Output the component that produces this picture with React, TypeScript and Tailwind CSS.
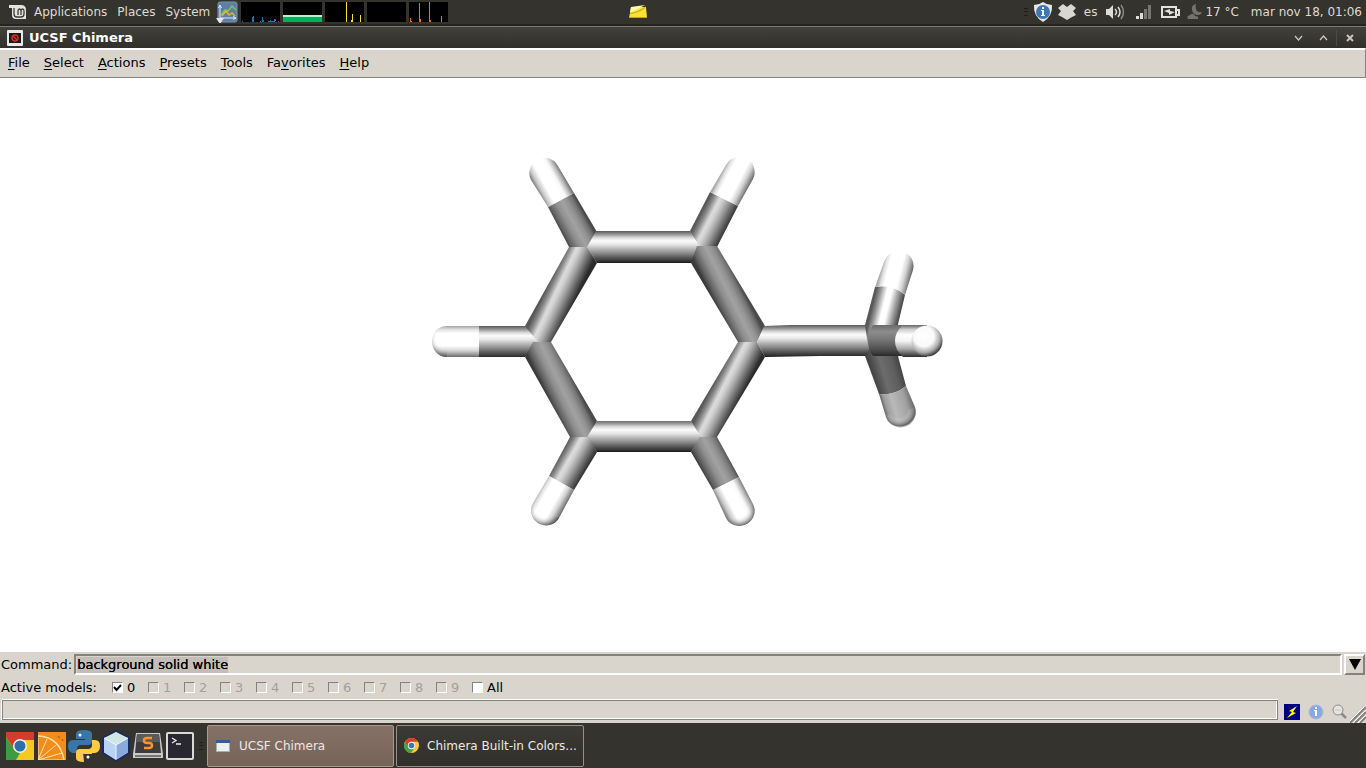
import React from "react";

type Pt = [number, number];
type Stops = [number, string][];

const LIT: Stops = [[0, "#626262"], [0.1, "#999"], [0.2, "#dadada"], [0.3, "#fcfcfc"], [0.42, "#e6e6e6"], [0.55, "#bababa"], [0.7, "#8a8a8a"], [0.85, "#555"], [0.95, "#363636"], [1, "#1e1e1e"]];
const SIDE: Stops = [[0, "#585858"], [0.14, "#888"], [0.32, "#dcdcdc"], [0.42, "#d2d2d2"], [0.6, "#a4a4a4"], [0.82, "#606060"], [1, "#2a2a2a"]];
const DULL: Stops = [[0, "#4a4a4a"], [0.12, "#747474"], [0.28, "#929292"], [0.45, "#a2a2a2"], [0.65, "#8e8e8e"], [0.86, "#626262"], [1, "#3a3a3a"]];
const WHITE: Stops = [[0, "#acacac"], [0.1, "#e2e2e2"], [0.22, "#fff"], [0.62, "#fff"], [0.78, "#d4d4d4"], [0.92, "#8e8e8e"], [1, "#606060"]];
const WHITE_DULL: Stops = [[0, "#747474"], [0.12, "#bcbcbc"], [0.26, "#f8f8f8"], [0.38, "#fff"], [0.68, "#fff"], [0.86, "#c8c8c8"], [1, "#747474"]];
const BRIGHT: Stops = [[0, "#585858"], [0.15, "#999"], [0.35, "#fff"], [0.5, "#fff"], [0.68, "#b0b0b0"], [0.87, "#606060"], [1, "#2c2c2c"]];
const SHADE: Stops = [[0, "#3e3e3e"], [0.3, "#5e5e5e"], [0.65, "#6c6c6c"], [1, "#444"]];
const SHADE_H: Stops = [[0, "#6a6a6a"], [0.25, "#a2a2a2"], [0.65, "#b9b9b9"], [0.88, "#9c9c9c"], [1, "#606060"]];
const FRONT: Stops = [[0, "#6c6c6c"], [0.2, "#8d8d8d"], [0.45, "#777"], [0.8, "#4a4a4a"], [1, "#262626"]];

// A stick piece: outline d, shaded across the axis that runs from a to b.
const sticks: { d: string; a: Pt; b: Pt; stops: Stops }[] = [
  { d: "M548 207L574 193 597 232 588 247H569Z", a: [544, 172], b: [584, 245], stops: DULL },
  { d: "M548 207L574 193 558 166A15 15 0 1 0 531 180Z", a: [544, 172], b: [584, 245], stops: WHITE_DULL },
  { d: "M710 192L738 206 717 247H697L690 231Z", a: [703, 243], b: [740, 171], stops: SIDE },
  { d: "M710 192L738 206 753 179A15 15 0 1 0 726 165Z", a: [703, 243], b: [740, 171], stops: WHITE },
  { d: "M596 231H690L700 247 691 263H597L587 247Z", a: [590, 247], b: [700, 247], stops: LIT },
  { d: "M569 247H587L597 263 551 342H533L525 326Z", a: [538, 342], b: [583, 247], stops: SIDE },
  { d: "M697 246H717L765 326 757 342H738L691 263Z", a: [704, 247], b: [751, 341], stops: DULL },
  { d: "M479 326H525L538 342 525 357H479Z", a: [447, 342], b: [538, 342], stops: LIT },
  { d: "M479 326H447A15 15 0 0 0 447 357H479Z", a: [447, 342], b: [538, 342], stops: WHITE },
  { d: "M533 342H551L597 421 590 437H570L525 357Z", a: [538, 342], b: [584, 437], stops: DULL },
  { d: "M738 342H757L765 357 717 437H699L691 421Z", a: [704, 436], b: [752, 342], stops: SIDE },
  { d: "M597 421H691L701 437 691 452H597L587 437Z", a: [590, 436], b: [700, 436], stops: LIT },
  { d: "M570 437H588L597 452 574 490 549 476Z", a: [546, 510], b: [586, 440], stops: SIDE },
  { d: "M574 490L549 476 533 503A15 15 0 1 0 559 518Z", a: [546, 510], b: [586, 440], stops: WHITE },
  { d: "M691 452L700 437H717L739 477 713 490Z", a: [703, 441], b: [740, 511], stops: DULL },
  { d: "M739 477L713 490 726 518A15 15 0 1 0 753 504Z", a: [703, 441], b: [740, 511], stops: WHITE_DULL },
  { d: "M764 326L790 325H872V356H820L765 357 757 342Z", a: [757, 341], b: [870, 341], stops: LIT },
  { d: "M865 325L875 287Q893 284 905 295L893 345H868Z", a: [881, 335], b: [898, 266], stops: BRIGHT },
  { d: "M875 287Q893 284 905 295L913 270A15 15 0 1 0 884 262Z", a: [881, 335], b: [898, 266], stops: WHITE },
  { d: "M865 356L872 345H895L906 386Q894 396 879 394Z", a: [880, 345], b: [900, 411], stops: SHADE },
  { d: "M906 386Q894 396 879 394L886 417A15 15 0 0 0 915 407Z", a: [880, 345], b: [900, 411], stops: SHADE_H },
  { d: "M873 325H905V356H873Q868 350 868 341T873 325Z", a: [868, 341], b: [910, 341], stops: FRONT },
  { d: "M903 325H927V357H903Q895 350 895 341T903 325Z", a: [895, 341], b: [930, 341], stops: [[0, "#707070"], [0.12, "#ccc"], [0.3, "#fff"], [0.5, "#f4f4f4"], [0.75, "#aaa"], [1, "#333"]] },
];

function Molecule() {
  return (
    <svg viewBox="0 78 1366 574" className="h-full w-full" role="img" aria-label="Toluene stick model">
      <defs>
        {sticks.map(({ a, b, stops }, i) => {
          const dx = b[0] - a[0];
          const dy = b[1] - a[1];
          const n = Math.hypot(dx, dy);
          const side = dx < 0 ? -1 : 1;
          const cx = (a[0] + b[0]) / 2;
          const cy = (a[1] + b[1]) / 2;
          const nx = side * (-dy / n) * 15.5;
          const ny = side * (dx / n) * 15.5;
          return (
            <linearGradient key={i} id={`s${i}`} gradientUnits="userSpaceOnUse" x1={cx - nx} y1={cy - ny} x2={cx + nx} y2={cy + ny}>
              {stops.map(([o, c]) => <stop key={o} offset={o} stopColor={c} />)}
            </linearGradient>
          );
        })}
        <radialGradient id="ball" cx=".4" cy=".35" r=".65">
          <stop offset="0" stopColor="#fff" /><stop offset=".5" stopColor="#fafafa" /><stop offset=".8" stopColor="#aaa" /><stop offset="1" stopColor="#444" />
        </radialGradient>
        <radialGradient id="cap" cx=".45" cy=".4" r=".6">
          <stop offset=".5" stopColor="#fff" stopOpacity="0" /><stop offset="1" stopColor="#444" stopOpacity=".8" />
        </radialGradient>
        <clipPath id="tips"><path d="M430 325H447V359H430ZM528 502L562 520V528H528ZM724 520L757 502V528H724ZM882 417L917 407V428H882Z" /></clipPath>
      </defs>
      {sticks.map(({ d }, i) => <path key={i} d={d} fill={`url(#s${i})`} />)}
      <g clipPath="url(#tips)" fill="url(#cap)">
        <circle cx="447.500" cy="341.500" r="15.500" /><circle cx="546" cy="510.500" r="15" />
        <circle cx="739.500" cy="511" r="15" /><circle cx="900" cy="411.500" r="15" />
      </g>
      <circle cx="927" cy="341" r="15.500" fill="url(#ball)" />
    </svg>
  );
}

function ChromeIcon({ className }: { className: string }) {
  return (
    <svg viewBox="0 0 28 28" className={className}>
      <circle cx="14" cy="14" r="14" fill="#fc3" />
      <path d="M1.900 7A14 14 0 0 1 26.100 7H14L8 17.500Z" fill="#dd3a2f" />
      <path d="M1.900 7A14 14 0 0 0 13 28L20 17.500 14 20.500 8 17.500Z" fill="#3da447" />
      <circle cx="14" cy="14" r="6.800" fill="#f4f4f0" /><circle cx="14" cy="14" r="5.200" fill="#3b78b8" />
    </svg>
  );
}

const graphs = [
  { name: "Processor", svg: <path d="M1 20v-1h1v1M11 20v-5h1v5M12 20v-6h1v6M19 20v-1h1v1M21 20v-5h1v5M22 20v-2h1v2M27 20v-1h2v-1h1v2M30 20v-1h3v-2h2v2h-1v1M37 20v-1h1v1" fill="#1377bb" /> },
  { name: "Memory", svg: <><path d="M0 13h39v7H0z" fill="#00b35b" /><path d="M0 13h39v2H0z" fill="#aef5cf" /></> },
  { name: "Network", svg: <path d="M21 0h1v20h-1zM27 12h1v8h-2v-2h1zM35 13h1v7h-1z" fill="#fce02f" /> },
  { name: "Swap", svg: null },
  { name: "Disk", svg: <path d="M1 16h1v3h1v1H1zM10 1h1v16h1v3h-2zM20 0h1v20h-1zM21 18h1v2h-1zM32 14h1v6h-1z" fill="#f96e1d" /> },
];

function Handle() {
  return <div className="h-2 w-1 border-y border-[#1e1d1a] py-[2px]"><div className="h-px bg-[#1e1d1a]" /></div>;
}

function TopPanel() {
  return (
    <header className="flex h-[26px] shrink-0 items-center border-b-2 border-[#252420] bg-[#34332e] text-xs text-[#dfdbd2]">
      <svg viewBox="0 0 18 16" className="ml-[9px] mr-[7px] h-4 w-[18px]" fill="none">
        <path d="M0 1h12q5 0 5 5v9H7q-4 0-4-4V4H0z" fill="#e4e3df" />
        <path d="M5 4v6q0 3 3 3h4q3 0 3-3V7q0-2-1.500-2T12 7v4M12 7q0-2-1.500-2T9 7v4" stroke="#3b3a35" strokeWidth="1.300" />
      </svg>
      <nav className="flex gap-[10px]">
        <button>Applications</button><button>Places</button><button>System</button>
      </nav>
      <svg viewBox="0 0 22 22" className="ml-[6px] h-[22px] w-[22px]" fill="none">
        <rect x="2" y="1" width="19" height="20" rx="2" fill="#5c7fa6" stroke="#7895b3" />
        <path d="M5 14L9 9l3 1 4-5 4 4" stroke="#86c252" strokeWidth="1.500" /><path d="M6 15l4-5 3 4 3-2 3 3" stroke="#e0b52c" strokeWidth="1.500" />
        <path d="M4 5v12h15M2.500 7L4 4l1.500 3M17 15.500l3 1.500-3 1.500" stroke="#e5eaf0" /><path d="M0 17h8l-4 6z" fill="#e6e6e6" />
      </svg>
      <div className="ml-[3px] flex gap-[3px]">
        {graphs.map((g) => <svg key={g.name} viewBox="0 0 39 20" className="h-5 w-[39px] bg-black" shapeRendering="crispEdges" aria-label={g.name}>{g.svg}</svg>)}
      </div>
      <svg viewBox="0 0 20 14" className="ml-[181px] h-[14px] w-5">
        <path d="M2 2h15l1 11H0z" fill="#f9e23a" /><path d="M2 2L16 0 1 8z" fill="#fff9a8" /><path d="M1 8Q10 7 17 1l-1 2Q10 8 1 9z" fill="#c8a416" /><path d="M0 12h18v1H0z" fill="#c8a416" />
      </svg>
      <div className="ml-auto flex items-center pr-1">
        <Handle />
        <svg viewBox="0 0 20 20" className="ml-[5px] h-5 w-5">
          <path d="M10 0q4 3 9 3Q20 14 10 20 0 14 1 3q5 0 9-3z" fill="#e8e8e4" /><circle cx="10" cy="10" r="7" fill="#3e77b6" />
          <path d="M9 5h2v2H9zM8 8h3v5h1v1H8v-1h1V9H8z" fill="#fff" />
        </svg>
        <svg viewBox="0 0 18 16" className="ml-[5px] h-4 w-[18px]" fill="#d9d7d1">
          <path d="M5 0l4 3 4-3 5 4-3 3 3 4-4 2-5 3-5-3-4-2 3-4-3-3z" />
        </svg>
        <span className="ml-2">es</span>
        <svg viewBox="0 0 20 16" className="ml-[9px] h-4 w-5" fill="none" stroke="#dedcd7">
          <path d="M0 5h3l4-4v14l-4-4H0z" fill="#dedcd7" stroke="none" /><path d="M9 5q3 3 0 6" strokeWidth="1.500" /><path d="M12 3q4 5 0 10" strokeWidth="1.500" /><path d="M15 1q5 7 0 14" stroke="#8a8883" strokeWidth="1.500" />
        </svg>
        <svg viewBox="0 0 16 14" className="ml-[10px] h-[14px] w-4">
          <path d="M0 11h3v3H0zM4 8h3v6H4z" fill="#dedcd7" /><path d="M8 4h3v10H8zM12 0h3v14h-3z" fill="#777570" />
        </svg>
        <svg viewBox="0 0 19 14" className="ml-[9px] h-[14px] w-[19px]" fill="none">
          <path d="M1 2h14v10H1zM15 5h3v5h-3" stroke="#e4e2dd" strokeWidth="2" /><path d="M3 6l6-2v2l5 1-6 3V8z" fill="#e4e2dd" />
        </svg>
        <svg viewBox="0 0 16 16" className="ml-[7px] h-4 w-4" fill="#75736e">
          <path d="M9 0Q4 1 5 6T11 11q3 0 4-3-5 1-6-3-1-3 0-5z" /><path d="M1 15q-2-3 2-4 3-3 5 1 4 0 3 3z" />
        </svg>
        <span className="ml-[2px]">17 °C</span>
        <time className="ml-3">mar nov 18, 01:06</time>
      </div>
    </header>
  );
}

function TitleBar() {
  return (
    <div className="flex h-[22px] shrink-0 items-center border-t border-[#7b7972] bg-linear-to-b from-[#42413c] to-[#302f2b] text-[#dfdbd2]">
      <svg viewBox="0 0 16 16" className="ml-[7px] mr-[6px] h-4 w-4" fill="none">
        <rect width="16" height="16" rx="1" fill="#e8e8e8" /><path d="M2 3h12v10H2z" fill="#15191a" /><circle cx="8" cy="8" r="3" stroke="#db2b21" strokeWidth="1.500" /><path d="M6 6l4 4" stroke="#db2b21" strokeWidth="1.500" />
      </svg>
      <h1 className="text-[13px] font-bold text-white">UCSF Chimera</h1>
      <div className="ml-auto flex h-full items-center pr-1">
        <button aria-label="Minimize" className="flex w-[25px] justify-center"><svg viewBox="0 0 9 6" className="h-[6px] w-[9px]"><path d="M1 1l3.500 4L8 1" fill="none" stroke="#cfcbc3" strokeWidth="1.200" /></svg></button>
        <button aria-label="Maximize" className="flex w-[25px] justify-center"><svg viewBox="0 0 9 6" className="h-[6px] w-[9px]"><path d="M1 5l3.500-4L8 5" fill="none" stroke="#cfcbc3" strokeWidth="1.200" /></svg></button>
        <button aria-label="Close" className="flex h-4 w-[26px] items-center justify-center border-l border-[#4c4b46]"><svg viewBox="0 0 8 8" className="h-2 w-2"><path d="M1 1l6 6M7 1L1 7" stroke="#c8c4bc" strokeWidth="2" /></svg></button>
      </div>
    </div>
  );
}

const menus: [string, string, string][] = [["", "F", "ile"], ["", "S", "elect"], ["", "A", "ctions"], ["", "P", "resets"], ["", "T", "ools"], ["Fa", "v", "orites"], ["", "H", "elp"]];

function CommandArea() {
  return (
    <section className="shrink-0 bg-[#d9d5cd] pt-[2px] text-[13px] text-black">
      <div className="flex h-[21px] items-center">
        <label htmlFor="command" className="pl-px pr-[2px]">Command:</label>
        <div className="flex h-full flex-1 items-center border-2 border-t-[#85817b] border-l-[#85817b] border-r-white border-b-white pl-px">
          <input id="command" defaultValue="background solid white" className="h-4 bg-[#c3bfb8] outline-none [field-sizing:content] text-shadow-[0_0_0_#000]" />
        </div>
        <button aria-label="Command history" className="ml-[2px] mr-px flex h-full w-[21px] items-center justify-center border-2 border-t-white border-l-white border-r-[#85817b] border-b-[#85817b]">
          <svg viewBox="0 0 12 11" className="h-[11px] w-3"><path d="M0 0h12L6 11z" /></svg>
        </button>
      </div>
      <div className="flex h-[25px] items-center">
        <span className="w-28 pl-px">Active models:</span>
        {["0", "1", "2", "3", "4", "5", "6", "7", "8", "9", "All"].map((m) => {
          const on = m === "0" || m === "All";
          return (
            <label key={m} className={on ? "relative flex w-9 items-center gap-1" : "flex w-9 items-center gap-1 text-[#a39f99]"}>
              <input type="checkbox" defaultChecked={m === "0"} disabled={!on} className={on ? "h-[11px] w-[11px] shrink-0 appearance-none border border-t-[#85817b] border-l-[#85817b] border-r-white border-b-white bg-white" : "h-[11px] w-[11px] shrink-0 appearance-none border border-t-[#85817b] border-l-[#85817b] border-r-white border-b-white"} />
              {m === "0" && <svg viewBox="0 0 9 8" className="pointer-events-none absolute left-px h-2 w-[9px]"><path d="M1 3l2.500 3L8 1" fill="none" stroke="#000" strokeWidth="2" /></svg>}
              {m}
            </label>
          );
        })}
      </div>
      <div className="flex h-[23px] items-center">
        <div className="ml-[2px] mb-1 h-[20px] flex-1 border border-[#85817b] shadow-[inset_-1px_-1px_0_#fff,0_-1px_0_#fff,-1px_0_0_#fff]" />
        <button aria-label="Quick access" className="ml-[6px]">
          <svg viewBox="0 0 16 16" className="h-4 w-4"><path d="M0 0h16v16H0z" fill="#000080" /><path d="M13 2L5 7l3 1-5 6 9-5-3-1z" fill="#ff0" /></svg>
        </button>
        <button aria-label="Information" className="ml-2">
          <svg viewBox="0 0 16 16" className="h-4 w-4"><circle cx="8" cy="8" r="7" fill="#86a8e3" stroke="#b3b9c8" /><path d="M7 3h2v2H7zM6 6h3v6H7V7H6z" fill="#fff" /></svg>
        </button>
        <button aria-label="Find" className="ml-2">
          <svg viewBox="0 0 16 16" className="h-4 w-4" fill="none"><path d="M9.500 9.500L14 14" stroke="#8e8b86" strokeWidth="2.500" /><circle cx="6" cy="6" r="5" fill="#e6e4df" stroke="#8e8b86" /><path d="M3 6h6" stroke="#c7c4be" /></svg>
        </button>
        <svg viewBox="0 0 16 16" className="ml-[2px] h-4 w-4 self-end" fill="none"><path d="M0 16L16 0M5 16L16 5M10 16l6-6" stroke="#85817b" strokeWidth="2" /><path d="M-2 16L16-2M3 16L16 3M8 16l8-8" stroke="#fff" /></svg>
      </div>
    </section>
  );
}

function Taskbar() {
  return (
    <footer className="flex h-[45px] shrink-0 items-center bg-[#34332e] text-xs text-[#eeeae3]">
      <div className="flex items-center gap-[2px] pl-1">
        <button aria-label="Chrome" className="flex w-8 justify-center">
          <svg viewBox="0 0 28 28" className="h-7 w-7">
            <path d="M0 0h28v28H0z" fill="#f7c91f" /><path d="M0 0h28v8H14L8 17 0 5z" fill="#d63b2e" /><path d="M0 5l8 12 6 4-4 7H0z" fill="#3f9b41" />
            <circle cx="14" cy="14" r="7" fill="#f1f1ec" /><circle cx="14" cy="14" r="5.500" fill="#2f6ea9" />
          </svg>
        </button>
        <button aria-label="Orange" className="flex w-7 justify-center">
          <svg viewBox="0 0 28 28" className="h-7 w-7" fill="none">
            <path d="M0 0h28v28H0z" fill="#f28c1c" /><path d="M0 4Q22 5 26 28" stroke="#ffe2a8" strokeWidth="1.500" />
            <path d="M0 28L0 6M0 28L9 7M0 28L18 13M0 28L24 21M0 28h26" stroke="#ffe2a8" /><path d="M20 4l2 2M24 7l1 2" stroke="#c65f0b" strokeWidth="1.500" />
          </svg>
        </button>
        <button aria-label="Python">
          <svg viewBox="0 0 32 32" className="h-8 w-8">
            <path d="M16 0q-8 0-8 4v5h9v1H5q-5 0-5 6t5 7h4v-4q0-4 4-4h7q4 0 4-4V4q0-4-8-4z" fill="#3a75a8" /><path d="M16 32q8 0 8-4v-5h-9v-1M16 32q-8 0-8-4v-5q0-4 4-4h8q4 0 4-4v-5h3q5 0 5 6t-5 7H15v1h9v4q0 4-8 4z" fill="#fc4" />
            <circle cx="12" cy="5" r="1.500" fill="#fff" /><circle cx="20" cy="27" r="1.500" fill="#fff" />
          </svg>
        </button>
        <button aria-label="VirtualBox" className="-ml-px">
          <svg viewBox="0 0 30 32" className="h-8 w-[30px]" stroke="#1b2a5c" strokeWidth="2" strokeLinejoin="round">
            <path d="M15 1l13 7v15l-13 8-13-8V8z" fill="#a9c4ec" /><path d="M3 8l12-6 12 6-12 7z" fill="#cfe6e4" stroke="none" /><path d="M15 15l12-7v14l-12 8z" fill="#8aa9dc" stroke="none" /><path d="M3 9l12 6v15L3 22z" fill="#b9d2f5" stroke="none" /><path d="M3 8l12 7 12-7M15 15v14" fill="none" stroke="#f2f8ff" strokeWidth="1" />
          </svg>
        </button>
        <button aria-label="Sublime">
          <svg viewBox="0 0 30 28" className="h-7 w-[30px]">
            <path d="M3 1h24l3 21v4H0v-4z" fill="#c9c9c9" /><path d="M4 2h22l2 19H2z" fill="#3c3c3c" /><path d="M4 2h22l1 8H3z" fill="#5a5a5a" /><path d="M2 23h26v2H2z" fill="#777" />
            <path d="M19 6h-5q-3 0-3 2.500t3 2.500h2q3 0 3 2.500T16 16h-5" fill="none" stroke="#ff9426" strokeWidth="2.500" />
          </svg>
        </button>
        <button aria-label="Terminal" className="ml-px">
          <svg viewBox="0 0 28 28" className="h-7 w-7" fill="none">
            <rect x="1" y="1" width="26" height="26" rx="1" fill="#292832" stroke="#d9d9d9" strokeWidth="2" /><path d="M6 6l4 2.500L6 11M10 12h5" stroke="#eee" strokeWidth="1.300" />
          </svg>
        </button>
      </div>
      <div className="ml-[5px] mr-1"><Handle /></div>
      <button className="flex h-[42px] w-[187px] items-center rounded-[2px] border border-[#a89b8c] bg-linear-to-b from-[#877166] to-[#766459] pl-2 whitespace-nowrap">
        <svg viewBox="0 0 14 12" className="mr-[9px] h-3 w-[14px]"><path d="M0 0h14v12H0z" fill="#9cb0b5" /><path d="M1 3h12v8H1z" fill="#eeeeea" /><path d="M0 0h14v3H0z" fill="#2e5da4" /></svg>
        UCSF Chimera
      </button>
      <button className="ml-[2px] flex h-[42px] w-[188px] items-center rounded-[2px] border border-[#969084] bg-linear-to-b from-[#3b3a35] to-[#302f2b] pl-[7px] whitespace-nowrap">
        <ChromeIcon className="mr-2 h-[15px] w-[15px]" />
        Chimera Built-in Colors...
      </button>
    </footer>
  );
}

export default function App() {
  return (
    <div className="flex h-screen flex-col overflow-hidden bg-white font-['DejaVu_Sans',sans-serif] leading-4">
      <TopPanel />
      <TitleBar />
      <nav className="flex h-[30px] shrink-0 items-center gap-[14px] border-t-2 border-r border-b border-t-white border-r-[#85817b] border-b-[#85817b] bg-[#d9d5cd] pb-[2px] pl-2 text-[13px] text-black">
        {menus.map(([pre, key, post]) => (
          <button key={key}>{pre}<span className="underline underline-offset-2">{key}</span>{post}</button>
        ))}
      </nav>
      <main className="min-h-0 flex-1 bg-white"><Molecule /></main>
      <CommandArea />
      <Taskbar />
    </div>
  );
}
